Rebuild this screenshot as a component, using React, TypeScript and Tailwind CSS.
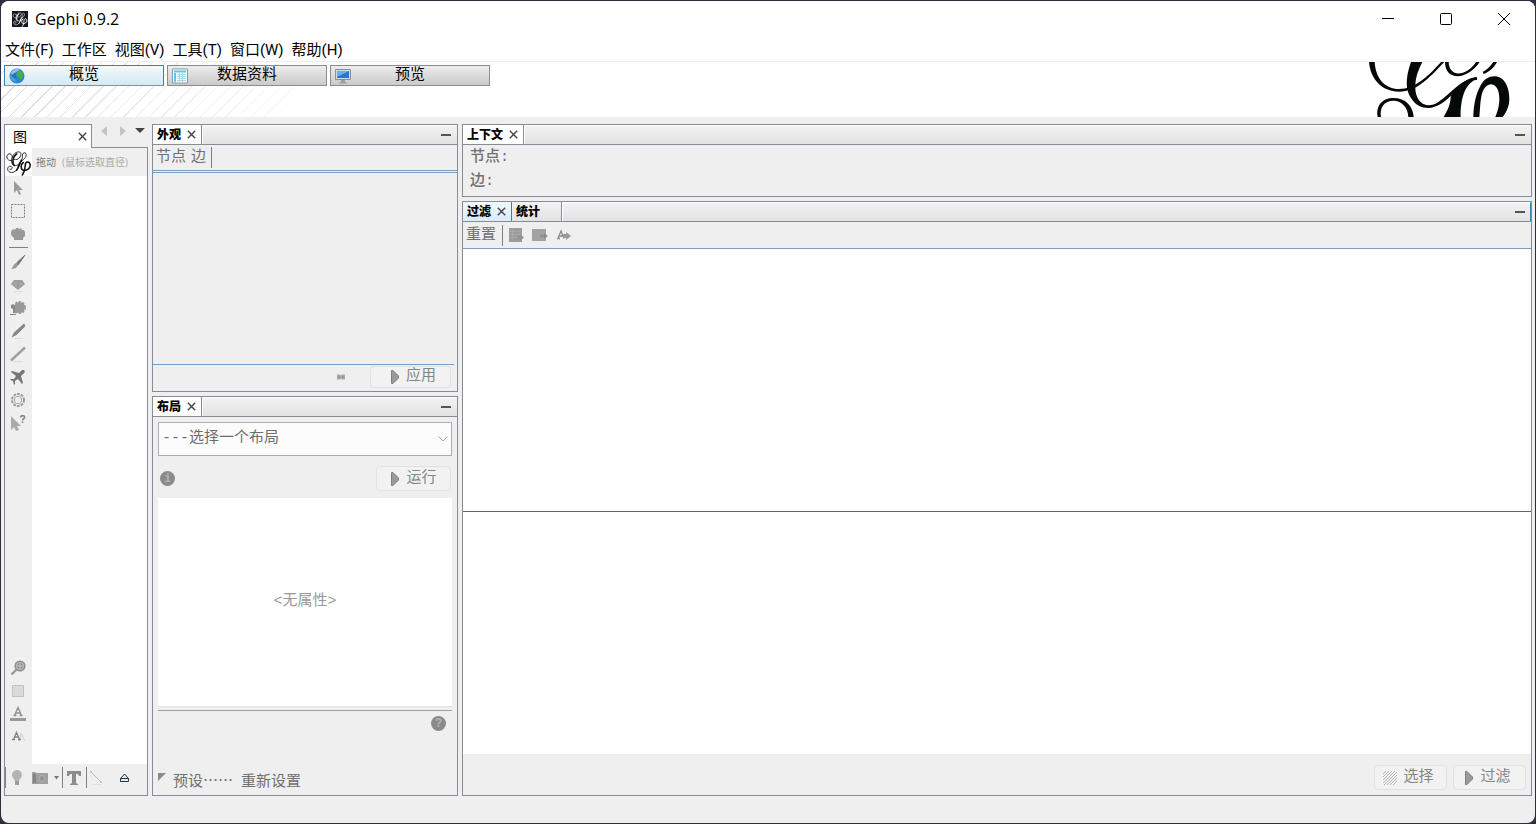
import type { ReactNode } from "react";

interface TabItem {
  label: string;
  closable?: boolean;
  focused?: boolean;
}

interface PanelProps {
  tabs: TabItem[];
  className?: string;
  children: ReactNode;
}

const MENUS = ["文件(F)", "工作区", "视图(V)", "工具(T)", "窗口(W)", "帮助(H)"];

const CloseIcon = () => (
  <svg width="9" height="9" viewBox="0 0 9 9" stroke="#444" strokeWidth="1.4" aria-hidden="true">
    <path d="M0.8 0.8 8.2 8.2M8.2 0.8 0.8 8.2" />
  </svg>
);

const PlayIcon = () => (
  <svg width="10" height="16" viewBox="0 0 10 16" aria-hidden="true">
    <path d="M1.500 1.500h1.500L8.500 7v2L3 14.500H1.500z" fill="#9a9a9a" stroke="#808080" />
  </svg>
);

const Separator = () => <span className="h-[21px] w-px shrink-0 bg-[#808080]" />;

function Panel({ tabs, className = "", children }: PanelProps) {
  const focused = tabs.some((tab) => tab.focused);
  return (
    <section className={`flex flex-col border border-[#898c95] bg-[#efefef] ${className}`}>
      <div className="flex h-5 shrink-0 border-b border-[#898c95] bg-linear-to-b from-[#f3f3f3] to-[#e2e2e2]">
        {tabs.map((tab) => (
          <div
            key={tab.label}
            className={`flex items-center gap-[6px] border-r pl-1 font-['Open_Sans','Noto_Sans_CJK_SC',sans-serif] text-[12px] leading-[18px] font-black text-black ${
              tab.focused
                ? "border-[#3c7fb1] bg-linear-to-b from-[#f2f8fd] to-[#d9ecfa] pr-[5px]"
                : tab.closable
                  ? "border-[#898c95] bg-white pr-[5px]"
                  : "border-[#898c95] pr-[21px]"
            }`}
          >
            <span>{tab.label}</span>
            {tab.closable && (
              <button type="button" aria-label={`关闭${tab.label}`}>
                <CloseIcon />
              </button>
            )}
          </div>
        ))}
        <div
          className={`flex flex-1 items-center justify-end border-t border-l border-white ${
            focused ? "border-r border-r-[#3c7fb1] pr-[5px]" : "pr-[6px]"
          }`}
        >
          <button type="button" aria-label="最小化" className="h-[2px] w-[10px] bg-[#555]" />
        </div>
      </div>
      {children}
    </section>
  );
}

/* Banner */

const GlobeIcon = () => (
  <svg width="16" height="16" viewBox="0 0 16 16" aria-hidden="true">
    <circle cx="8" cy="8" r="7.5" fill="#2f86cc" />
    <path d="M2 5C4 1 8 0 11 2L7 4 3 7z" fill="#8ec5ee" />
    <path d="M8 3c3-1 5 0 7 3l-2 1 1 2-2 3-2-3-3-2 2-2z" fill="#42b53a" />
    <path d="M2 8l3 1 2 3-1 2C3 13 1 11 1 8z" fill="#4a9fdd" />
    <path d="M5 5l2 1-1 2 2 2-2 1-3-3z" fill="#2470ac" />
  </svg>
);

const TableIcon = () => (
  <svg width="16" height="16" viewBox="0 0 16 16" aria-hidden="true">
    <path d="M.5 1h15v14H.5z" fill="#fff" stroke="#8d9aa2" />
    <path d="M2 2.500h12v2H2zM2 5h2v9H2z" fill="#5ac6ea" />
    <path d="M5 6.500h9M5 8.500h9M5 10.500h9M5 12.500h9M7.500 5v9M10.500 5v9" stroke="#a5d9ea" />
  </svg>
);

const MonitorIcon = () => (
  <svg width="16" height="16" viewBox="0 0 16 16" aria-hidden="true">
    <path d="M.5 1.500h15v10H.5z" fill="#d5d9df" stroke="#8b9098" />
    <path d="M2 3h12v7H2z" fill="#2878c8" />
    <path d="M2 3h12L2 9z" fill="#64b2f0" />
    <path d="M6 12h4v2H6zM4.500 14h7v1.500h-7z" fill="#9a9ea5" />
  </svg>
);

const BannerLogo = () => (
  <svg width="150" height="55" viewBox="0 0 450 165" fill="#040807" aria-hidden="true">
    <path d="M12 0C16 50 50 89 102 89C155 89 190 50 238 0H228C188 44 150 81 102 81C60 81 32 50 29 0z" />
    <path d="M138 0C120 50 122 85 138 108C152 130 170 138 190 138C215 136 238 122 257 101C280 76 308 54 336 54V46C300 50 275 74 250 96C228 115 212 130 190 130C166 129 150 105 151 75C151 45 160 25 172 0z" />
    <path d="M336 50C298 66 286 112 287 165H236C250 140 257 125 257 101C280 66 310 46 336 46z" />
    <path d="M240 0C240 58 308 55 344 0H333C303 45 252 46 251 0z" />
    <path d="M385 0C376 13 366 23 354 29L355 36C374 30 387 17 396 0z" />
    <path d="M325 165C326 125 333 96 346 72C356 53 370 43 388 43C417 43 433 73 433 111C433 132 425 149 413 165H391C402 139 405 118 402 97C398 64 370 55 354 86C345 108 346 138 343 165z" />
    <path d="M38 165C32 130 53 108 85 108C122 108 144 132 146 165H130C129 137 111 116 85 116C59 116 43 135 48 165z" />
  </svg>
);

const VIEWS = [
  { label: "概览", icon: <GlobeIcon />, active: true },
  { label: "数据资料", icon: <TableIcon />, active: false },
  { label: "预览", icon: <MonitorIcon />, active: false },
];

function Banner() {
  return (
    <div className="flex h-14 shrink-0 items-start border-t border-[#efefef] bg-[linear-gradient(90deg,transparent_0,#fff_330px),repeating-linear-gradient(135deg,#fff_0_8px,#dcdcdc_8px_9px)]">
      <div className="flex flex-1 gap-[3px] pt-[3px] pl-[3px]">
        {VIEWS.map((view) => (
          <button
            key={view.label}
            type="button"
            className={`flex h-[21px] w-40 items-center border pl-1 text-[15px] leading-[18px] text-black ${
              view.active
                ? "border-[#3c7fb1] border-b-[#8b9098] bg-linear-to-b from-[#f3fafd] to-[#d3e9f3]"
                : "border-[#898c95] bg-linear-to-b from-[#ededed] to-[#cacaca]"
            }`}
          >
            {view.icon}
            <span className="flex-1 pr-5 text-center">{view.label}</span>
          </button>
        ))}
      </div>
      <div className="mr-5">
        <BannerLogo />
      </div>
    </div>
  );
}

/* Graph tool icons */

const ScriptLogo = ({ size, color }: { size: number; color: string }) => (
  <svg width={size} height={size} viewBox="0 0 28 28" fill="none" stroke={color} strokeLinecap="round" aria-hidden="true">
    <path d="M6 12C1 12 1 6 4 5C8 4 7 11 11 11C16 11 19 3 14 3C8 3 4 14 9 17C13 19 19 12 18 7C18 3 22 3 22 6C22 10 17 12 15 15" strokeWidth=".9" />
    <path d="M12 5C8 8 7 14 9.500 17" strokeWidth="1.800" />
    <path d="M17 11C15 20 10 26 5 24C1 22 3 17 6 18C9 19 7 22 5 21" strokeWidth=".9" />
    <path d="M17 12C14 16 14 20 12 22" strokeWidth="1.600" />
    <path d="M19 14C16 16 16 21 19 22C22 23 27 20 26 16C25 12 21 13 21 17C21 21 20 24 18 27" strokeWidth="1.600" />
  </svg>
);

const TOOLS: { name: string; icon: ReactNode }[] = [
  {
    name: "选择",
    icon: <path d="M4 1v12l3-3 2 5 2-1-2-4h4z" fill="#9b9b9b" />,
  },
  {
    name: "矩形选择",
    icon: <path d="M1.500 1.500h13v13h-13z" fill="none" stroke="#808080" strokeDasharray="2 1" />,
  },
  {
    name: "拖动",
    icon: <path d="M2 4l2-1 1 1 1-2h2l1 1 2-1 1 2h2l1 2v4l-2 2v2H4v-2L1 9V6z" fill="#999" />,
  },
  {
    name: "画笔",
    icon: (
      <>
        <path d="M15 1 6.500 9l1.500 2z" fill="#777" stroke="#777" />
        <path d="M6 9l2 2c-1 3-4 4-7 4 2-1 2-5 5-6z" fill="#999" />
      </>
    ),
  },
  {
    name: "尺寸",
    icon: (
      <>
        <path d="M4 3h8l3 4-7 6-7-6z" fill="#999" />
        <path d="M1 7h14M5 7l3 6 3-6M4 3l1 4 3-4 3 4 1-4" stroke="#b2b2b2" fill="none" strokeWidth=".6" />
        <path d="M4 14.500h8" stroke="#ddd" />
      </>
    ),
  },
  {
    name: "画刷",
    icon: (
      <>
        <circle cx="9.500" cy="7.500" r="5.500" fill="#999" stroke="#999" strokeWidth="2" strokeDasharray="2 1.500" />
        <path d="M1 5c3-2 4 1 4 3l1 5H3V9L1 8z" fill="#8c8c8c" />
        <path d="M0 14.500h6" stroke="#858585" />
      </>
    ),
  },
  {
    name: "节点铅笔",
    icon: (
      <>
        <path d="M14 .5 4 9.500l-2.500 5 5-2.500 9-9z" fill="#858585" />
        <path d="M4 15.500h9" stroke="#ddd" />
      </>
    ),
  },
  {
    name: "边铅笔",
    icon: (
      <>
        <path d="M15 1.500 1 14.500" stroke="#a0a0a0" strokeWidth="2.500" />
        <path d="M4 15.500h9" stroke="#ddd" />
      </>
    ),
  },
  {
    name: "最短路径",
    icon: <path d="M14 1l1 2-4 4 2 7-1 1-4-5-3 2v3l-1 1-1-4-3-1 1-1h3l2-3-5-4 1-1 7 2 3-3z" fill="#777" />,
  },
  {
    name: "热图",
    icon: (
      <>
        <circle cx="8" cy="8" r="6" fill="none" stroke="#999" strokeWidth="2" strokeDasharray="2.700 1.100" />
        <circle cx="8" cy="8" r="3.700" fill="none" stroke="#aaa" />
      </>
    ),
  },
  {
    name: "编辑",
    icon: (
      <>
        <path d="M1 1v14l3-3 2 4 3-1-2-4h4z" fill="#aaa" />
        <path d="M10.500 2.500C11 0 15 0 14.500 2.500 14 4 12.500 4 12.500 5.500M12.500 6.500V8" fill="none" stroke="#858585" strokeWidth="1.600" />
      </>
    ),
  },
];

const VIEW_TOOLS: { name: string; icon: ReactNode }[] = [
  {
    name: "居中",
    icon: (
      <>
        <path d="M7 9l-5.500 5.500" stroke="#999" strokeWidth="2.400" />
        <circle cx="10" cy="6" r="4.800" fill="#bbb" stroke="#8c8c8c" strokeWidth="1.500" />
        <path d="M8 5.500V4h1.500M10.500 4H12v1.500M12 6.500V8h-1.500M9.500 8H8V6.500" fill="none" stroke="#808080" />
      </>
    ),
  },
  {
    name: "背景颜色",
    icon: <path d="M2.500 2.500h11v11h-11z" fill="#dadada" stroke="#c2c2c2" />,
  },
  {
    name: "标签颜色",
    icon: (
      <>
        <path d="M4.500 9.500 8 1.500l3.500 8M6 7h4M3.500 9.500h3M9.500 9.500h3" fill="none" stroke="#909090" strokeWidth="1.300" />
        <path d="M0 12h16v3H0z" fill="#999" />
      </>
    ),
  },
  {
    name: "标签大小",
    icon: (
      <>
        <path d="M9 12l2-7 4 7" fill="none" stroke="#d8d8d8" strokeWidth="1.500" />
        <path d="M3.500 10.500 6.500 3.500l3 7M4.500 8h4M2 10.500h3M8 10.500h3" fill="none" stroke="#858585" strokeWidth="1.300" />
      </>
    ),
  },
];

function ToolButton({ name, icon }: { name: string; icon: ReactNode }) {
  return (
    <button type="button" aria-label={name} className="flex h-[23px] w-[26px] shrink-0 items-center justify-center">
      <svg width="16" height="16" viewBox="0 0 16 16" aria-hidden="true">
        {icon}
      </svg>
    </button>
  );
}

function GraphPanel() {
  return (
    <section className="flex w-36 shrink-0 flex-col">
      <div className="flex h-6 shrink-0">
        <div className="flex w-[88px] items-center justify-between border-t border-r border-l border-[#898c95] bg-white pr-1 pl-2 font-['Open_Sans','Noto_Sans_CJK_SC',sans-serif] text-[14px] leading-5 text-black">
          图
          <button type="button" aria-label="关闭图">
            <CloseIcon />
          </button>
        </div>
        <div className="flex flex-1 items-start justify-end border-b border-[#898c95] pt-[2px] pr-[3px]">
          <svg width="46" height="10" viewBox="0 0 46 10" aria-hidden="true">
            <path d="M8 0v10L2 5zM21 0v10l6-5z" fill="#c4c4c4" />
            <path d="M36 2h10l-5 5z" fill="#444" />
          </svg>
        </div>
      </div>
      <div className="flex min-h-0 flex-1 flex-col border-r border-b border-l border-[#898c95] bg-[#efefef]">
        <div className="flex min-h-0 flex-1">
          <div className="flex w-[27px] shrink-0 flex-col pb-4">
            <div className="flex h-7 shrink-0 items-center bg-white">
              <ScriptLogo size={27} color="#111" />
            </div>
            {TOOLS.slice(0, 3).map((tool) => (
              <ToolButton key={tool.name} {...tool} />
            ))}
            <div className="flex h-[5px] shrink-0 items-center justify-center">
              <span className="h-px w-[19px] bg-[#808080]" />
            </div>
            {TOOLS.slice(3).map((tool) => (
              <ToolButton key={tool.name} {...tool} />
            ))}
            <div className="flex-1" />
            {VIEW_TOOLS.map((tool) => (
              <ToolButton key={tool.name} {...tool} />
            ))}
          </div>
          <div className="flex flex-1 flex-col bg-white">
            <div className="flex h-7 shrink-0 items-center gap-[6px] bg-[#efefef] pl-1 font-['Open_Sans','Noto_Sans_CJK_SC',sans-serif] text-[10px] whitespace-nowrap">
              <span className="text-[#777]">拖动</span>
              <span className="text-[#aaa]">(鼠标选取直径)</span>
            </div>
          </div>
        </div>
        <div className="flex h-[31px] shrink-0 items-center pb-1">
          <Separator />
          <button type="button" aria-label="灯光" className="ml-1">
            <svg width="14" height="18" viewBox="0 0 14 18" aria-hidden="true">
              <path d="M7 1a5 5 0 0 1 5 5c0 3-3 4-3 7H5c0-3-3-4-3-7a5 5 0 0 1 5-5z" fill="#b4b4b4" />
              <path d="M5 12h4v4H5z" fill="#9c9c9c" />
            </svg>
          </button>
          <button type="button" aria-label="截图" className="ml-2">
            <svg width="16" height="14" viewBox="0 0 16 14" aria-hidden="true">
              <path d="M0 1h4v1h12v11H0z" fill="#a0a0a0" />
              <path d="M1 3h3v9H1z" fill="#858585" />
              <circle cx="10" cy="7.500" r="3" fill="#959595" stroke="#b5b5b5" />
            </svg>
          </button>
          <button type="button" aria-label="截图选项" className="ml-[6px]">
            <svg width="5" height="4" viewBox="0 0 5 4" aria-hidden="true">
              <path d="M0 0h5L2.500 3.500z" fill="#777" />
            </svg>
          </button>
          <span className="w-[3px]" />
          <Separator />
          <button type="button" aria-label="显示标签" className="mx-1">
            <svg width="15" height="16" viewBox="0 0 15 16" aria-hidden="true">
              <path d="M0 1h14v5h-2l-1-2H9v9l2 1v1H3v-1l2-1V4H3L2 6H0z" fill="#8c8c8c" />
            </svg>
          </button>
          <Separator />
          <button type="button" aria-label="显示边" className="ml-[3px]">
            <svg width="14" height="16" viewBox="0 0 14 16" aria-hidden="true">
              <path d="M1 2l10 10" stroke="#bbb" />
              <path d="M0 1h2v2H0zM10 11h2v2h-2z" fill="#c4c4c4" />
              <path d="M3 14.500h9" stroke="#e0e0e0" />
            </svg>
          </button>
          <button type="button" aria-label="展开" className="ml-[15px]">
            <svg width="11" height="11" viewBox="0 0 11 11" aria-hidden="true">
              <path d="M5.500 2 1.500 6.500v3h8v-3zM1.500 6.500h8" fill="#e8edf2" stroke="#2c3340" />
            </svg>
          </button>
        </div>
      </div>
    </section>
  );
}

/* Middle column */

function ActionButton({ label, icon, className = "" }: { label: string; icon: ReactNode; className?: string }) {
  return (
    <button
      type="button"
      className={`flex items-center justify-center gap-[6px] rounded border border-[#e2e2e2] bg-[#f2f2f2] text-[15px] leading-5 text-[#858585] ${className}`}
    >
      {icon}
      {label}
    </button>
  );
}

function RoundIcon({ label, glyph }: { label: string; glyph: string }) {
  return (
    <button
      type="button"
      aria-label={label}
      className="flex h-[15px] w-[15px] items-center justify-center rounded-full bg-[#8a8a8a] text-[12px] leading-none font-bold text-[#b4b4b4]"
    >
      {glyph}
    </button>
  );
}

function AppearancePanel() {
  return (
    <Panel tabs={[{ label: "外观", closable: true }]} className="h-[268px] shrink-0">
      <div className="flex h-[25px] shrink-0 items-center gap-[5px] pl-[3px] text-[15px] leading-6 text-[#707070]">
        <button type="button" className="pt-px">节点</button>
        <button type="button" className="pt-px">边</button>
        <Separator />
      </div>
      <div className="h-[3px] shrink-0 border-y border-[#7a9ebf]" />
      <div className="flex-1" />
      <div className="mr-[3px] h-px shrink-0 bg-[#7a9ebf]" />
      <div className="flex h-[26px] shrink-0 items-start justify-end gap-6 pt-px pr-[6px]">
        <svg width="10" height="22" viewBox="0 0 10 22" aria-hidden="true">
          <path d="M1 8.500h3l1 1 1-1h3v5H6l-1-1-1 1H1z" fill="#aaa" />
          <path d="M2 11h2M6 11h2" stroke="#888" />
        </svg>
        <ActionButton label="应用" icon={<PlayIcon />} className="h-[22px] w-[81px] pl-[5px]" />
      </div>
    </Panel>
  );
}

function LayoutPanel() {
  return (
    <Panel tabs={[{ label: "布局", closable: true }]} className="min-h-0 flex-1">
      <div className="flex min-h-0 flex-1 flex-col px-[5px] pt-[5px]">
        <div className="relative shrink-0">
          <select
            aria-label="布局"
            className="block h-[34px] w-full appearance-none border border-[#abadb3] bg-[#fcfcfc] pl-[3px] text-[15px] text-[#6d6d6d]"
          >
            <option>---选择一个布局</option>
          </select>
          <svg width="10" height="6" viewBox="0 0 10 6" className="pointer-events-none absolute top-[14px] right-1" aria-hidden="true">
            <path d="M.5.500 5 5 9.500.5" fill="none" stroke="#a8a8a8" />
          </svg>
        </div>
        <div className="flex h-[42px] shrink-0 items-center justify-between pt-[3px] pr-px pl-[2px]">
          <RoundIcon label="信息" glyph="i" />
          <ActionButton label="运行" icon={<PlayIcon />} className="h-[25px] w-[75px]" />
        </div>
        <div className="flex min-h-0 flex-1 items-center justify-center border-b border-[#e2e2e2] bg-white text-[15px] leading-6 text-[#999]">
          &lt;无属性&gt;
        </div>
        <div className="mt-[3px] flex h-[21px] shrink-0 items-end justify-end border-t border-[#a0a0a0] pr-[6px]">
          <RoundIcon label="帮助" glyph="?" />
        </div>
        <div className="flex h-16 shrink-0 items-end gap-2 pb-1 font-['Noto_Sans_CJK_SC',sans-serif] text-[15px] leading-[22px] text-[#707070]">
          <button type="button" className="flex items-center gap-[6px]">
            <svg width="9" height="14" viewBox="0 0 9 14" aria-hidden="true">
              <path d="M0 0h8L0 8z" fill="#8c8c8c" />
            </svg>
            预设……
          </button>
          <button type="button">重新设置</button>
        </div>
      </div>
    </Panel>
  );
}

/* Right column */

function FilterPanel() {
  return (
    <Panel
      tabs={[{ label: "过滤", closable: true, focused: true }, { label: "统计" }]}
      className="min-h-0 flex-1"
    >
      <div className="flex h-[27px] shrink-0 items-center border-b border-[#7a9ebf] pl-[3px] text-[15px] leading-6 text-[#707070]">
        <button type="button" className="mr-[6px] pt-px">重置</button>
        <Separator />
        <div className="flex items-center gap-2 pl-[5px]">
          <button type="button" aria-label="导出列">
            <svg width="16" height="16" viewBox="0 0 16 16" aria-hidden="true">
              <path d="M1 1h13v14H1z" fill="#9c9c9c" />
              <path d="M2 4.500h11M2 7.500h11M2 10.500h11M4.500 2v12" stroke="#a8a8a8" />
              <path d="M9 9h3V7l4 3.500-4 3.500v-2H9z" fill="#949494" />
            </svg>
          </button>
          <button type="button" aria-label="导出到新工作区">
            <svg width="16" height="16" viewBox="0 0 16 16" aria-hidden="true">
              <path d="M0 2h14v12H0z" fill="#a2a2a2" />
              <path d="M8 8h4V6l4 3-4 3v-2H8z" fill="#8c8c8c" />
            </svg>
          </button>
          <button type="button" aria-label="隐藏标签">
            <svg width="16" height="16" viewBox="0 0 16 16" aria-hidden="true">
              <path d="M2 11.500 5 4l3 7.500M3.500 9h3M1 11.500h3" fill="none" stroke="#8c8c8c" strokeWidth="1.300" />
              <path d="M7 7h3V5l5 4-5 4v-2H7z" fill="#999" />
            </svg>
          </button>
        </div>
      </div>
      <div className="min-h-0 basis-[262px] grow bg-white" />
      <div className="h-px shrink-0 bg-[#646464]" />
      <div className="min-h-0 basis-[242px] grow bg-white" />
      <div className="flex h-[41px] shrink-0 items-start justify-end gap-[6px] pt-[11px] pr-[5px]">
        <ActionButton
          label="选择"
          className="h-[25px] w-[73px] pr-1"
          icon={
            <svg width="14" height="14" viewBox="0 0 14 14" aria-hidden="true">
              <path d="M0 3l3-3M0 6l6-6M0 9l9-9M0 12 12 0M1 14 14 1M4 14 14 4M7 14l7-7M10 14l4-4" stroke="#b5b5b5" />
            </svg>
          }
        />
        <ActionButton label="过滤" icon={<PlayIcon />} className="h-[25px] w-[73px] pr-1" />
      </div>
    </Panel>
  );
}

export default function App() {
  return (
    <div className="h-screen bg-[#2b2f3f] p-px font-['Liberation_Mono','Noto_Sans_CJK_SC',monospace]">
      <div className="flex h-full flex-col overflow-hidden rounded-lg bg-[#efefef]">
        <header className="flex h-9 shrink-0 items-center bg-white pl-[11px] font-['Open_Sans',sans-serif] text-[16px] text-black">
          <span className="bg-[#15181b]">
            <ScriptLogo size={16} color="#fff" />
          </span>
          <h1 className="flex-1 pl-[7px]">Gephi 0.9.2</h1>
          <div className="flex gap-[46px] pr-[25px]">
            <button type="button" aria-label="最小化窗口">
              <svg width="12" height="12" viewBox="0 0 12 12" stroke="#000" aria-hidden="true">
                <path d="M0 5.500h12" />
              </svg>
            </button>
            <button type="button" aria-label="最大化窗口">
              <svg width="12" height="12" viewBox="0 0 12 12" fill="none" stroke="#000" aria-hidden="true">
                <rect x=".5" y=".5" width="11" height="11" rx="1" />
              </svg>
            </button>
            <button type="button" aria-label="关闭窗口">
              <svg width="12" height="12" viewBox="0 0 12 12" stroke="#000" aria-hidden="true">
                <path d="M0 0l12 12M12 0 0 12" />
              </svg>
            </button>
          </div>
        </header>
        <nav className="flex h-6 shrink-0 items-center gap-2 bg-white pt-px pl-1 font-['Roboto','Noto_Sans_CJK_SC',sans-serif] text-[15px] leading-5 text-black">
          {MENUS.map((menu) => (
            <button key={menu} type="button">
              {menu}
            </button>
          ))}
        </nav>
        <Banner />
        <main className="flex min-h-0 flex-1 gap-1 pt-[7px] pr-[3px] pb-[27px] pl-[3px]">
          <GraphPanel />
          <div className="flex w-[306px] shrink-0 flex-col gap-1">
            <AppearancePanel />
            <LayoutPanel />
          </div>
          <div className="flex min-w-0 flex-1 flex-col gap-1">
            <Panel tabs={[{ label: "上下文", closable: true }]} className="h-[73px] shrink-0">
              <div className="flex flex-col pt-px pl-[7px] text-[15px] leading-6 font-medium text-[#707070]">
                <span>节点:</span>
                <span>边:</span>
              </div>
            </Panel>
            <FilterPanel />
          </div>
        </main>
      </div>
    </div>
  );
}
